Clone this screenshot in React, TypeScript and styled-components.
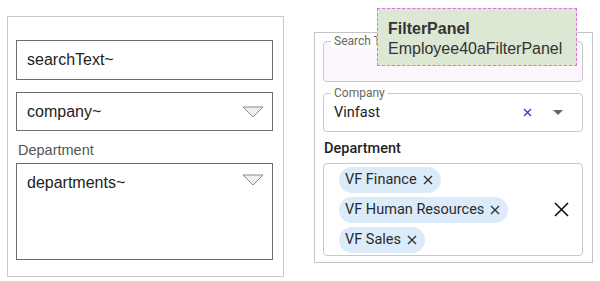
import React from "react";
import styled, { createGlobalStyle } from "styled-components";

const Global = createGlobalStyle`
  html, body { margin: 0; padding: 0; background: #fff; }
  body { width: 600px; height: 281px; overflow: hidden; }
`;

const Page = styled.div`
  display: flex;
  align-items: flex-start;
  width: 600px;
  height: 281px;
  position: relative;
`;

/* ---------- wireframe (left) ---------- */
const WirePanel = styled.div`
  box-sizing: border-box;
  margin: 16px 0 0 7px;
  width: 277px;
  height: 261px;
  border: 1px solid #c9c9c9;
  padding: 23px 10px 0 8px;
  display: flex;
  flex-direction: column;
  font-family: "Liberation Sans", Arial, sans-serif;
`;

const WireBox = styled.div<{ $h: number; $top?: boolean }>`
  box-sizing: border-box;
  height: ${(p) => p.$h}px;
  border: 1px solid #6e6e6e;
  display: flex;
  align-items: ${(p) => (p.$top ? "flex-start" : "center")};
  justify-content: space-between;
  padding: ${(p) => (p.$top ? "10px 8px 0 10px" : "0 8px 0 10px")};
  font-size: 16px;
  color: #222;
`;

const WireLabel = styled.div`
  font-size: 14.5px;
  color: #555;
  margin: 11px 0 5px 2px;
  line-height: 16px;
`;

const Gap = styled.div<{ $h: number }>`
  height: ${(p) => p.$h}px;
  flex: none;
`;

const WireTri = () => (
  <svg width="22" height="12" viewBox="0 0 22 12">
    <polygon points="1,1 21,1 11,11" fill="#efefef" stroke="#8a8a8a" strokeWidth="1" />
  </svg>
);

/* ---------- MUI-like (right) ---------- */
const MuiPanel = styled.div`
  box-sizing: border-box;
  margin: 32px 0 0 30px;
  width: 279px;
  height: 231px;
  border: 1px solid #c4c4c4;
  padding: 8px 9px 0 8px;
  display: flex;
  flex-direction: column;
  font-family: Roboto, "Liberation Sans", sans-serif;
`;

const Field = styled.div<{ $h: number; $bg?: string }>`
  position: relative;
  box-sizing: border-box;
  height: ${(p) => p.$h}px;
  border: 1px solid #c8c8c8;
  border-radius: 4px;
  background: ${(p) => p.$bg || "#fff"};
  display: flex;
  align-items: center;
  padding: 0 19px 0 10px;
`;

const Legend = styled.span`
  position: absolute;
  top: -8px;
  left: 7px;
  padding: 0 3px;
  background: #fff;
  font-size: 12px;
  line-height: 14px;
  color: #666;
`;

const Value = styled.span`
  flex: 1;
  font-size: 14.5px;
  color: #222;
`;

const Adorn = styled.div`
  display: flex;
  align-items: center;
  gap: 21px;
`;

const DeptLabel = styled.div`
  font-size: 14.5px;
  font-weight: 500;
  color: #1f1f1f;
  margin: 8px 0 6px 1px;
  line-height: 17px;
`;

const MultiBox = styled.div`
  box-sizing: border-box;
  height: 93px;
  border: 1px solid #c8c8c8;
  border-radius: 4px;
  display: flex;
  align-items: center;
  padding: 0 13px 0 15px;
`;

const ChipList = styled.div`
  flex: 1;
  display: flex;
  flex-direction: column;
  align-items: flex-start;
  gap: 4px;
`;

const Chip = styled.div`
  display: inline-flex;
  align-items: center;
  gap: 6px;
  height: 26px;
  padding: 0 8px 0 6px;
  border-radius: 13px;
  background: #dcebfa;
  color: #2a2a2a;
  font-size: 14.5px;
`;

const Tip = styled.div`
  position: absolute;
  left: 377px;
  top: 8px;
  box-sizing: border-box;
  width: 200px;
  height: 58px;
  background: #dce7d4;
  border: 1px dashed #e46be6;
  padding: 10px 10px 0 10px;
  font-family: "Liberation Sans", Arial, sans-serif;
  font-size: 16px;
  line-height: 20px;
  color: #333;
`;

const TipTitle = styled.div`
  font-weight: bold;
`;

const SmallX = ({ color = "#333", size = 10, w = 1.5 }: { color?: string; size?: number; w?: number }) => (
  <svg width={size} height={size} viewBox={`0 0 ${size} ${size}`}>
    <path d={`M1 1L${size - 1} ${size - 1}M${size - 1} 1L1 ${size - 1}`} stroke={color} strokeWidth={w} />
  </svg>
);

const Caret = () => (
  <svg width="10" height="5" viewBox="0 0 10 5">
    <polygon points="0,0 10,0 5,5" fill="#666" />
  </svg>
);

export default function App() {
  return (
    <Page>
      <Global />
      <WirePanel>
        <WireBox $h={40}>searchText~</WireBox>
        <Gap $h={12} />
        <WireBox $h={39}>
          company~
          <WireTri />
        </WireBox>
        <WireLabel>Department</WireLabel>
        <WireBox $h={97} $top>
          departments~
          <WireTri />
        </WireBox>
      </WirePanel>

      <MuiPanel>
        <Field $h={41} $bg="#fbf7fd">
          <Legend>Search Text</Legend>
        </Field>
        <Gap $h={11} />
        <Field $h={39}>
          <Legend>Company</Legend>
          <Value>Vinfast</Value>
          <Adorn>
            <SmallX color="#3b33c8" size={9} w={1.3} />
            <Caret />
          </Adorn>
        </Field>
        <DeptLabel>Department</DeptLabel>
        <MultiBox>
          <ChipList>
            <Chip>
              VF Finance <SmallX size={10} w={1.4} />
            </Chip>
            <Chip>
              VF Human Resources <SmallX size={10} w={1.4} />
            </Chip>
            <Chip>
              VF Sales <SmallX size={10} w={1.4} />
            </Chip>
          </ChipList>
          <SmallX color="#111" size={15} w={1.6} />
        </MultiBox>
      </MuiPanel>

      <Tip>
        <TipTitle>FilterPanel</TipTitle>
        Employee40aFilterPanel
      </Tip>
    </Page>
  );
}
